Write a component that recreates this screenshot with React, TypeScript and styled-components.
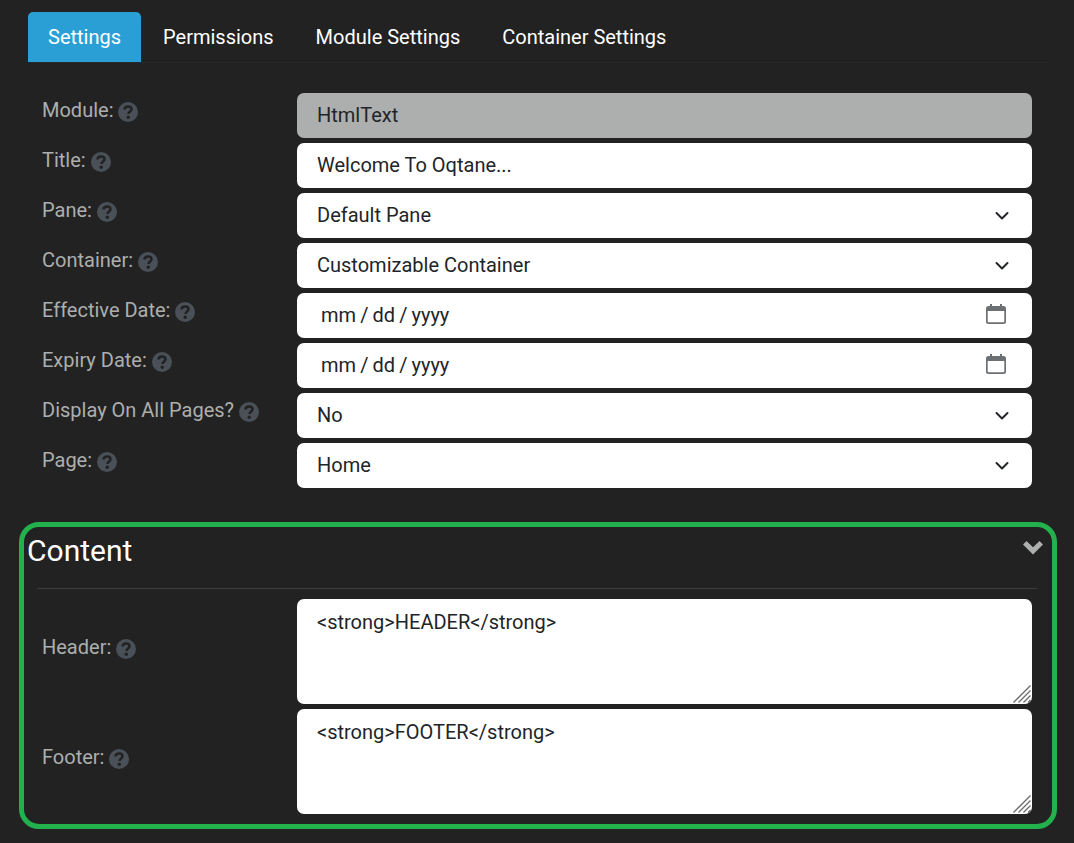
import React, { useState } from 'react';
import styled, { createGlobalStyle, css } from 'styled-components';

const GlobalStyle = createGlobalStyle`
  *, *::before, *::after { box-sizing: border-box; }
  body {
    margin: 0;
    background: #222222;
    color: #adafae;
    font-family: Roboto, "Liberation Sans", sans-serif;
    font-size: 20px;
    line-height: 30px;
  }
`;

const Page = styled.main`
  padding: 12px 17px 14px 19px;
`;

const TabBar = styled.nav`
  display: flex;
  gap: 2px;
  margin: 0 9px;
  border-bottom: 1px solid #282828;
`;

const Tab = styled.button<{ $active: boolean }>`
  height: 50px;
  padding: 0 20px;
  border: 0;
  border-radius: 5px 5px 0 0;
  background: ${(p) => (p.$active ? '#2a9fd6' : 'transparent')};
  color: #ffffff;
  font: inherit;
  white-space: nowrap;
  cursor: pointer;
`;

const Fields = styled.div<{ $inset: string }>`
  display: grid;
  gap: 5px;
  padding: ${(p) => p.$inset};
`;

const Row = styled.div`
  display: grid;
  grid-template-columns: minmax(0, 1fr) minmax(0, 3fr);
  column-gap: 10px;
  align-items: center;
`;

const LabelCell = styled.div<{ $tall?: boolean }>`
  display: flex;
  align-items: center;
  gap: 5px;
  padding-bottom: ${(p) => (p.$tall ? '9px' : '11px')};
  white-space: nowrap;
`;

const HelpSvg = styled.svg`
  width: 20px;
  height: 20px;
  margin-top: 4px;
  flex: none;
`;

const Control = styled.div`
  position: relative;
  display: flex;
`;

const fieldStyle = css`
  width: 100%;
  height: 45px;
  margin: 0;
  padding: 6px 20px 8px;
  border: 0;
  border-radius: 7px;
  outline: 0;
  background: #ffffff;
  color: #212529;
  font: inherit;
  line-height: 30px;
`;

const TextField = styled.input`
  ${fieldStyle}
  &:disabled { background: #adafae; }
`;

const DateField = styled.input`
  ${fieldStyle}
  padding-left: 24px;
  &::placeholder { color: #212529; opacity: 1; }
`;

const SelectField = styled.select`
  ${fieldStyle}
  appearance: none;
`;

const TextArea = styled.textarea`
  ${fieldStyle}
  display: block;
  height: 105px;
  padding: 8px 20px 7px;
  resize: none;
`;

const SelectArrow = styled.svg`
  position: absolute;
  top: 15px;
  right: 22px;
  width: 16px;
  height: 16px;
  pointer-events: none;
`;

const CalendarButton = styled.button`
  position: absolute;
  top: 11px;
  right: 26px;
  width: 20px;
  height: 20px;
  padding: 0;
  border: 0;
  background: transparent;
  svg { display: block; }
`;

const Grip = styled.svg`
  position: absolute;
  right: 1px;
  bottom: 1px;
  width: 18px;
  height: 18px;
  pointer-events: none;
`;

const ContentSection = styled.section`
  margin-top: 34px;
  border: 5px solid #22b14c;
  border-radius: 20px;
`;

const SectionHeader = styled.header`
  display: flex;
  justify-content: space-between;
  align-items: flex-start;
  padding: 5px 9px 19px 3px;
`;

const SectionTitle = styled.h2`
  margin: 0;
  color: #ffffff;
  font-size: 30px;
  font-weight: 400;
  line-height: 37px;
`;

const CollapseButton = styled.button`
  margin-top: 9px;
  padding: 0;
  border: 0;
  background: transparent;
  svg { display: block; }
`;

const Divider = styled.hr`
  height: 1px;
  margin: 0 15px 0 13px;
  border: 0;
  background: #3e3e3e;
`;

function HelpIcon() {
  return (
    <HelpSvg viewBox="0 0 20 20" aria-hidden="true">
      <circle cx="10" cy="10" r="10" fill="#495057" />
      <path d="M6.5 7.500C6.700 5.500 8 4.500 10 4.500c2.100 0 3.500 1 3.500 2.700 0 2.300-3 2.200-3 4.800" fill="none" stroke="#222222" strokeWidth="2.500" />
      <circle cx="10.300" cy="15.200" r="1.700" fill="#222222" />
    </HelpSvg>
  );
}

function Field({ id, label, tall, children }: { id: string; label: string; tall?: boolean; children: React.ReactNode }) {
  return (
    <Row>
      <LabelCell $tall={tall}>
        <label htmlFor={id}>{label}</label>
        <HelpIcon />
      </LabelCell>
      <Control>{children}</Control>
    </Row>
  );
}

function Select({ id, options }: { id: string; options: string[] }) {
  return (
    <>
      <SelectField id={id}>
        {options.map((o) => <option key={o}>{o}</option>)}
      </SelectField>
      <SelectArrow viewBox="0 0 16 16" aria-hidden="true">
        <path d="M2.500 5L8 10.500 13.500 5" fill="none" stroke="#212529" strokeWidth="2" strokeLinecap="round" strokeLinejoin="round" />
      </SelectArrow>
    </>
  );
}

function DateInput({ id }: { id: string }) {
  return (
    <>
      <DateField id={id} placeholder={'mm\u2009/\u2009dd\u2009/\u2009yyyy'} />
      <CalendarButton type="button" aria-label="Open calendar">
        <svg width="20" height="20" viewBox="0 0 20 20">
          <path d="M4 0h2v2h8V0h2v2h1.500a2.500 2.500 0 0 1 2.500 2.500v13a2.500 2.500 0 0 1-2.500 2.500h-15A2.500 2.500 0 0 1 0 17.500v-13A2.500 2.500 0 0 1 2.500 2H4zM1.700 7v10.300a1 1 0 0 0 1 1h14.600a1 1 0 0 0 1-1V7z" fill="#6d7073" />
        </svg>
      </CalendarButton>
    </>
  );
}

function MarkupInput({ id, value }: { id: string; value: string }) {
  return (
    <>
      <TextArea id={id} defaultValue={value} spellCheck={false} />
      <Grip viewBox="0 0 18 18" aria-hidden="true">
        <path d="M.5 17.500l17-17M5.500 17.500l12-12M10.500 17.500l7-7M15 17.500l2.500-2.500" stroke="#6b6b6b" strokeWidth="1.300" fill="none" />
      </Grip>
    </>
  );
}

const tabs = ['Settings', 'Permissions', 'Module Settings', 'Container Settings'];

export default function App() {
  const [active, setActive] = useState(tabs[0]);
  return (
    <>
      <GlobalStyle />
      <Page>
        <TabBar>
          {tabs.map((t) => (
            <Tab key={t} type="button" $active={t === active} onClick={() => setActive(t)}>{t}</Tab>
          ))}
        </TabBar>
        <Fields $inset="30px 25px 0 23px">
          <Field id="module" label="Module:"><TextField id="module" defaultValue="HtmlText" disabled /></Field>
          <Field id="title" label="Title:"><TextField id="title" defaultValue="Welcome To Oqtane..." /></Field>
          <Field id="pane" label="Pane:"><Select id="pane" options={['Default Pane']} /></Field>
          <Field id="container" label="Container:"><Select id="container" options={['Customizable Container']} /></Field>
          <Field id="effective" label="Effective Date:"><DateInput id="effective" /></Field>
          <Field id="expiry" label="Expiry Date:"><DateInput id="expiry" /></Field>
          <Field id="allpages" label="Display On All Pages?"><Select id="allpages" options={['No', 'Yes']} /></Field>
          <Field id="page" label="Page:"><Select id="page" options={['Home']} /></Field>
        </Fields>
        <ContentSection>
          <SectionHeader>
            <SectionTitle>Content</SectionTitle>
            <CollapseButton type="button" aria-label="Collapse content">
              <svg width="20" height="14" viewBox="0 0 20 14">
                <path d="M3.500 0L10 6.200 16.500 0 20 3.600 10 13.500 0 3.600z" fill="#adafae" />
              </svg>
            </CollapseButton>
          </SectionHeader>
          <Divider />
          <Fields $inset="10px 20px 10px 18px">
            <Field id="header" label="Header:" tall><MarkupInput id="header" value="<strong>HEADER</strong>" /></Field>
            <Field id="footer" label="Footer:" tall><MarkupInput id="footer" value="<strong>FOOTER</strong>" /></Field>
          </Fields>
        </ContentSection>
      </Page>
    </>
  );
}
